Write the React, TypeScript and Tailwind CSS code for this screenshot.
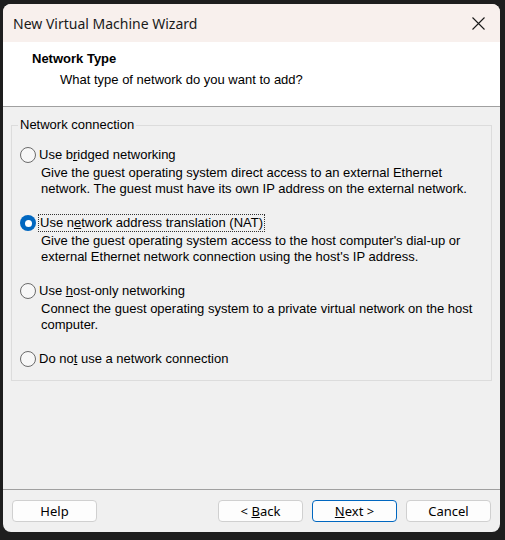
const body = { fontFamily: '"Liberation Sans", Arial, sans-serif' };
const ui = { fontFamily: '"Noto Sans", "Open Sans", sans-serif' };

function Radio({ checked }: { checked?: boolean }) {
  if (checked) {
    return (
      <span className="flex h-[16px] w-[16px] shrink-0 items-center justify-center rounded-full bg-[#0067c0]">
        <span className="h-[7px] w-[7px] rounded-full bg-white" />
      </span>
    );
  }
  return <span className="h-[16px] w-[16px] shrink-0 rounded-full border border-[#6b6b6b] bg-[#f7f7f7]" />;
}

function Option({
  label,
  desc,
  checked,
  focused,
}: {
  label: React.ReactNode;
  desc?: string[];
  checked?: boolean;
  focused?: boolean;
}) {
  return (
    <div className="flex flex-col">
      <div className="flex h-[16px] items-center">
        <Radio checked={checked} />
        <span
          className={
            focused
              ? "ml-[2px] border border-dotted border-[#333] px-[1px] leading-[16px]"
              : "ml-[3px] leading-[16px]"
          }
        >
          {label}
        </span>
      </div>
      {desc && (
        <div className="mt-[2px] pl-[21px]">
          {desc.map((d) => (
            <div key={d} className="leading-[16px]">
              {d}
            </div>
          ))}
        </div>
      )}
    </div>
  );
}

function Button({ children, primary }: { children: React.ReactNode; primary?: boolean }) {
  return (
    <button
      className={
        "h-[22px] w-[85px] rounded-[4px] border bg-[#fdfdfd] text-[13px] leading-none text-black " +
        (primary ? "border-[#0067c0]" : "border-[#d0d0d0]")
      }
      style={ui}
    >
      {children}
    </button>
  );
}

export default function App() {
  return (
    <div className="h-[540px] w-[505px] bg-[#1e1e1e] pl-[3px] pt-[4px]">
      <div className="flex h-[528px] w-[497px] flex-col overflow-hidden rounded-[8px] bg-[#f0f0f0]">
        {/* title bar */}
        <div className="flex h-[38px] items-center justify-between bg-[#f8f0ed] pl-[10px] pr-[14px]">
          <span className="text-[14px] text-[#1a1a1a]" style={ui}>
            New Virtual Machine Wizard
          </span>
          <svg width="13" height="13" viewBox="0 0 13 13" className="mr-[1px]">
            <path d="M0.5 0.5 L12.5 12.5 M12.5 0.5 L0.5 12.5" stroke="#1a1a1a" strokeWidth="1.1" />
          </svg>
        </div>

        {/* header */}
        <div className="h-[65px] border-b border-[#a0a0a0] bg-white pl-[29px] pt-[9px] text-[13px] text-black" style={body}>
          <div className="font-bold leading-[16px]">Network Type</div>
          <div className="mt-[5px] pl-[28px] leading-[16px]">What type of network do you want to add?</div>
        </div>

        {/* body */}
        <div className="flex flex-1 flex-col text-[13px] text-black" style={body}>
          <fieldset className="mx-[8px] mt-[10px] border border-[#dcdcdc] pb-[13px] pl-[6px]">
            <legend className="px-[2px] leading-[16px]">Network connection</legend>
            <div className="mt-[14px] flex flex-col gap-[18px] pl-[2px]">
              <Option
                label={
                  <>
                    Use b<u>r</u>idged networking
                  </>
                }
                desc={[
                  "Give the guest operating system direct access to an external Ethernet",
                  "network. The guest must have its own IP address on the external network.",
                ]}
              />
              <Option
                checked
                focused
                label={
                  <>
                    Use n<u>e</u>twork address translation (NAT)
                  </>
                }
                desc={[
                  "Give the guest operating system access to the host computer's dial-up or",
                  "external Ethernet network connection using the host's IP address.",
                ]}
              />
              <Option
                label={
                  <>
                    Use <u>h</u>ost-only networking
                  </>
                }
                desc={["Connect the guest operating system to a private virtual network on the host", "computer."]}
              />
              <Option
                label={
                  <>
                    Do no<u>t</u> use a network connection
                  </>
                }
              />
            </div>
          </fieldset>

          <div className="mt-auto border-t border-[#a0a0a0] px-[9px] pb-[10px] pt-[10px]">
            <div className="flex items-center">
              <Button>Help</Button>
              <div className="ml-auto flex gap-[9px]">
                <Button>
                  &lt; <u>B</u>ack
                </Button>
                <Button primary>
                  <u>N</u>ext &gt;
                </Button>
                <Button>Cancel</Button>
              </div>
            </div>
          </div>
        </div>
      </div>
    </div>
  );
}
